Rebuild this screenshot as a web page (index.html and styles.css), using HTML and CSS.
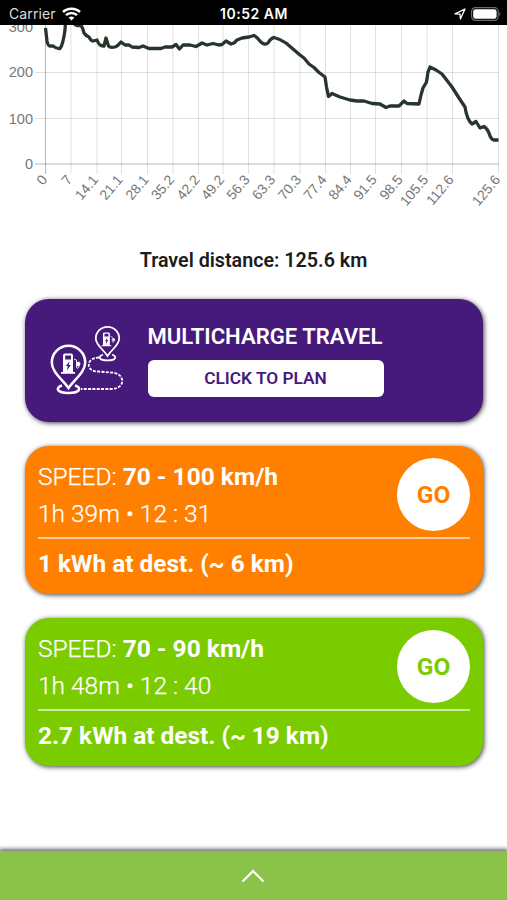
FILE: index.html
```html
<!DOCTYPE html>
<html lang="en">
<head>
    <meta charset="UTF-8">
    <meta name="viewport" content="width=device-width, initial-scale=1.0">
    <title>Travel plan</title>
    <link rel="stylesheet" href="styles.css">
</head>
<body>
    <header class="statusbar">
        <div class="carrier">
            <span>Carrier</span>
            <svg width="19" height="14" viewBox="0 0 19 14" fill="none" stroke="#fff" stroke-width="2.5">
                <path d="M1 5 C5.5 0.6 13.5 0.6 18 5"/>
                <path d="M4 8.2 C7 5.3 12 5.3 15 8.2"/>
                <path d="M9.5 13.5 L6.6 10.6 Q9.5 8.2 12.4 10.6 Z" fill="#fff" stroke="none"/>
            </svg>
        </div>
        <div class="clock">10:52 AM</div>
        <div class="indicators">
            <svg width="12" height="12" viewBox="0 0 12 12" fill="none" stroke="#fff" stroke-width="1.3" stroke-linejoin="round">
                <path d="M1 5.8 L11 1 L6.4 11 L6 6.1 Z"/>
            </svg>
            <svg width="30" height="14" viewBox="0 0 30 14">
                <rect x="0.6" y="0.6" width="26.6" height="12.8" rx="3.8" fill="none" stroke="#6b6b6b" stroke-width="1.2"/>
                <rect x="2.2" y="2.2" width="23.4" height="9.6" rx="2.4" fill="#fff"/>
                <path d="M28.3 4.8 Q30.6 7 28.3 9.2 Z" fill="#6b6b6b"/>
            </svg>
        </div>
    </header>

    <svg class="chart" width="507" height="190" viewBox="0 25 507 190">
        <g class="grid">
            <path d="M71 25V174M97 25V174M121.5 25V174M147.5 25V174M173 25V174M198.5 25V174M223 25V174M248.5 25V174M274 25V174M300 25V174M325.5 25V174M350.5 25V174M375.5 25V174M401.5 25V174M427 25V174M452.5 25V174M498.5 25V174"/>
            <path d="M35 72.5H499M35 118.5H499"/>
        </g>
        <path class="axis" d="M45.5 25V174M35 164H499"/>
        <g class="ylabels">
            <text x="33" y="32">300</text>
            <text x="33" y="77">200</text>
            <text x="33" y="123.5">100</text>
            <text x="33" y="168.5">0</text>
        </g>
        <g class="xlabels">
            <text transform="translate(48 180) rotate(-50)">0</text>
            <text transform="translate(73 180) rotate(-50)">7</text>
            <text transform="translate(99 180) rotate(-50)">14.1</text>
            <text transform="translate(123.5 180) rotate(-50)">21.1</text>
            <text transform="translate(149.5 180) rotate(-50)">28.1</text>
            <text transform="translate(175 180) rotate(-50)">35.2</text>
            <text transform="translate(200.5 180) rotate(-50)">42.2</text>
            <text transform="translate(225 180) rotate(-50)">49.2</text>
            <text transform="translate(250.5 180) rotate(-50)">56.3</text>
            <text transform="translate(276 180) rotate(-50)">63.3</text>
            <text transform="translate(302 180) rotate(-50)">70.3</text>
            <text transform="translate(327.5 180) rotate(-50)">77.4</text>
            <text transform="translate(352.5 180) rotate(-50)">84.4</text>
            <text transform="translate(377.5 180) rotate(-50)">91.5</text>
            <text transform="translate(403.5 180) rotate(-50)">98.5</text>
            <text transform="translate(429 180) rotate(-50)">105.5</text>
            <text transform="translate(454.5 180) rotate(-50)">112.6</text>
            <text transform="translate(501 180) rotate(-50)">125.6</text>
        </g>
        <path class="line" d="M45.5 28 L47 41 Q48 46 50 46 L53 46 Q57 49 60 48.5 Q63 45 65 30 L66 15 L73 22 Q75 25.5 77 25.5 L81 25.5 Q83 28 84 33 Q86 36 89 37 Q91 41 93 41 L97 40 Q99 45 101 45.5 L104 46 L106 38 L108.5 46 Q110 48 115 47 Q118 46 121 42 L125 45 L129 45 L132 47 L139 47.5 L143 46 L149 48.5 L161 48.5 L165 47 L172 47 L176 44.5 L179.5 49 L183 45 L190 45 L196 46.5 L202 43 L207 45 L213 43.5 L219 45 L222 44.5 L226 41 L231 44 L234 43 L237 40 L242 38 L249 37 L254 35.5 Q257 37 260 41 Q264 46 268 43 Q271 38 274 37.5 Q280 39 286 43 L293 49 L300 55 L304 58 L309 64 L314 67.5 L319 72.5 L325 77 L326.5 87 L328.5 96.5 L332 93.5 L340 97 L350 100 L357 101 L364 101 L372 103.5 L380 104 L386 107.5 L390 106 L399 106 L401 104 L404 101 L407 103.5 L419 104 L421 95 L423 88 L426.5 82 L428 72 L430 67 L436 70 L442 74 L452 87 L459 98 L465 107 Q467 120 472 124 L476 121.5 L480 128 L484 126.5 Q488 129 490 136 Q492 140 494 140 L498.5 140"/>
    </svg>

    <h1 class="distance">Travel distance: 125.6 km</h1>

    <main class="cards">
        <section class="card multi">
            <svg class="route" width="76" height="72" viewBox="50 324 76 72" fill="none" stroke="#fff">
                <path d="M99 357.5 C86 357.5 85 371.5 98 371.5 L111 372.5 C126 373 126 389 111 389 L81 389" stroke-width="1.8" stroke-dasharray="3 1.3"/>
                <path d="M68.5 388 C62 379 51.8 372 51.8 362.5 A16.7 16.7 0 0 1 85.2 362.5 C85.2 372 75 379 68.5 388 Z" stroke-width="2.5"/>
                <path d="M62 385.5 C55 387.5 56.5 393 68.5 393 C80.5 393 82 387.5 75 385.5" stroke-width="2.5"/>
                <path d="M107.5 356 C103 349 95.8 345 95.8 338.5 A11.7 11.7 0 0 1 119.2 338.5 C119.2 345 112 349 107.5 356 Z" stroke-width="1.8"/>
                <path d="M103 354.5 C97.5 356.5 99 360.3 107.5 360.3 C116 360.3 117.5 356.5 112 354.5" stroke-width="1.8"/>
                <g id="pump">
                    <path d="M63 372 V355.5 Q63 353.5 65 353.5 H71 Q73 353.5 73 355.5 V372 H75 V373.7 H61 V372 Z" fill="#fff" stroke="none"/>
                    <path d="M65.2 355.5 H71 V359.5 H65.2 Z M69.5 361.5 L65.8 366 H67.8 L67 370.5 L70.8 365 H68.8 Z" fill="#461a7a" stroke="none"/>
                    <path d="M74 359 L76.5 360 V367 Q77.5 370 79 366.5" stroke-width="0.9"/>
                    <path d="M76.5 362.5 L79 361.5 L80.5 363.5 L79.5 366.5 L77 366 Z" fill="#fff" stroke="none"/>
                </g>
                <use href="#pump" transform="translate(59.5 88.5) scale(.69)"/>
            </svg>
            <div class="plan">
                <h2>MULTICHARGE TRAVEL</h2>
                <button class="btn">CLICK TO PLAN</button>
            </div>
        </section>

        <section class="card orange">
            <div class="top">
                <div class="info">
                    <p>SPEED: <b>70 - 100 km/h</b></p>
                    <p>1h 39m • 12 : 31</p>
                </div>
                <button class="go">GO</button>
            </div>
            <p class="energy">1 kWh at dest. (~ 6 km)</p>
        </section>

        <section class="card green">
            <div class="top">
                <div class="info">
                    <p>SPEED: <b>70 - 90 km/h</b></p>
                    <p>1h 48m • 12 : 40</p>
                </div>
                <button class="go">GO</button>
            </div>
            <p class="energy">2.7 kWh at dest. (~ 19 km)</p>
        </section>
    </main>

    <footer class="drawer">
        <svg width="24" height="14" viewBox="0 0 24 14" fill="none" stroke="#fff" stroke-width="2.2">
            <path d="M1.5 12.5 L12 2 L22.5 12.5"/>
        </svg>
    </footer>
</body>
</html>
```
FILE: styles.css
```css
*{
    box-sizing: border-box;
    margin: 0;
    padding: 0;
}

body{
    display: flex;
    flex-direction: column;
    width: 507px;
    height: 900px;
    overflow: hidden;
    background-color: white;
    font-family: Roboto, sans-serif;
}

.statusbar{
    display: grid;
    grid-template-columns: 1fr auto 1fr;
    align-items: center;
    height: 25px;
    padding: 2px 6px 0 9px;
    background-color: black;
    color: white;
    font-family: Inter, "Liberation Sans", sans-serif;
    font-size: 14px;
}
.carrier{
    display: flex;
    align-items: center;
    gap: 6px;
    color: #ddd;
    letter-spacing: 0.1px;
}
.clock{
    margin-right: 2px;
    font-weight: 600;
    font-size: 14px;
    letter-spacing: 0.5px;
}
.indicators{
    display: flex;
    align-items: center;
    justify-content: flex-end;
    gap: 5px;
}

.chart{
    display: block;
    flex: none;
}
.grid path{
    stroke: rgba(0, 0, 0, 0.12);
    fill: none;
}
.axis{
    stroke: rgba(0, 0, 0, 0.28);
    fill: none;
}
.ylabels, .xlabels{
    font-family: "Liberation Sans", Arial, sans-serif;
    font-size: 14.5px;
    fill: #777;
    text-anchor: end;
}
.xlabels{
    font-size: 14px;
}
.line{
    fill: none;
    stroke: #27352b;
    stroke-width: 3.3;
    stroke-linejoin: round;
}

.distance{
    margin-top: 34px;
    height: 24px;
    line-height: 24px;
    text-align: center;
    font-size: 19.7px;
    font-weight: 600;
    color: #1c1c1c;
}

.cards{
    display: flex;
    flex-direction: column;
    gap: 24px;
    padding: 26px 24px 0 25px;
}
.card{
    border-radius: 24px;
    color: white;
    box-shadow: 1px 1px 5px rgba(0, 0, 0, 0.75);
}
.multi{
    display: flex;
    gap: 21.5px;
    height: 123px;
    padding: 25px;
    background-color: #461a7a;
}
.plan{
    width: 236px;
}
.plan h2{
    height: 36px;
    line-height: 24px;
    font-size: 22.1px;
    font-weight: 600;
    white-space: nowrap;
}
.btn{
    display: block;
    width: 100%;
    height: 37px;
    padding-bottom: 2px;
    border: none;
    border-radius: 6px;
    background-color: white;
    color: #461a7a;
    font-family: inherit;
    font-size: 17.3px;
    font-weight: 600;
}

.orange, .green{
    height: 148px;
    padding: 12px 13px;
}
.orange{
    background-color: #ff8000;
}
.green{
    background-color: #7acc00;
}
.top{
    display: flex;
    justify-content: space-between;
    height: 81px;
    border-bottom: 2px solid rgba(255, 255, 255, 0.6);
}
.info{
    font-size: 24.5px;
    font-weight: 300;
    line-height: 37px;
    -webkit-text-stroke: 0.25px white;
}
.info b{
    font-weight: 700;
    -webkit-text-stroke: 0;
}
.go{
    width: 73px;
    height: 73px;
    border: none;
    border-radius: 50%;
    background-color: white;
    font-family: inherit;
    font-size: 24.5px;
    font-weight: 700;
}
.orange .go{
    color: #ff8000;
}
.green .go{
    color: #7acc00;
}
.energy{
    padding-top: 6px;
    font-size: 24.4px;
    font-weight: 700;
    line-height: 37px;
}

.drawer{
    display: flex;
    justify-content: center;
    align-items: center;
    height: 49px;
    margin-top: auto;
    padding-right: 1px;
    background-color: #8bc34a;
    box-shadow: 0 -1px 4px 1px rgba(0, 0, 0, 0.6);
}
```
